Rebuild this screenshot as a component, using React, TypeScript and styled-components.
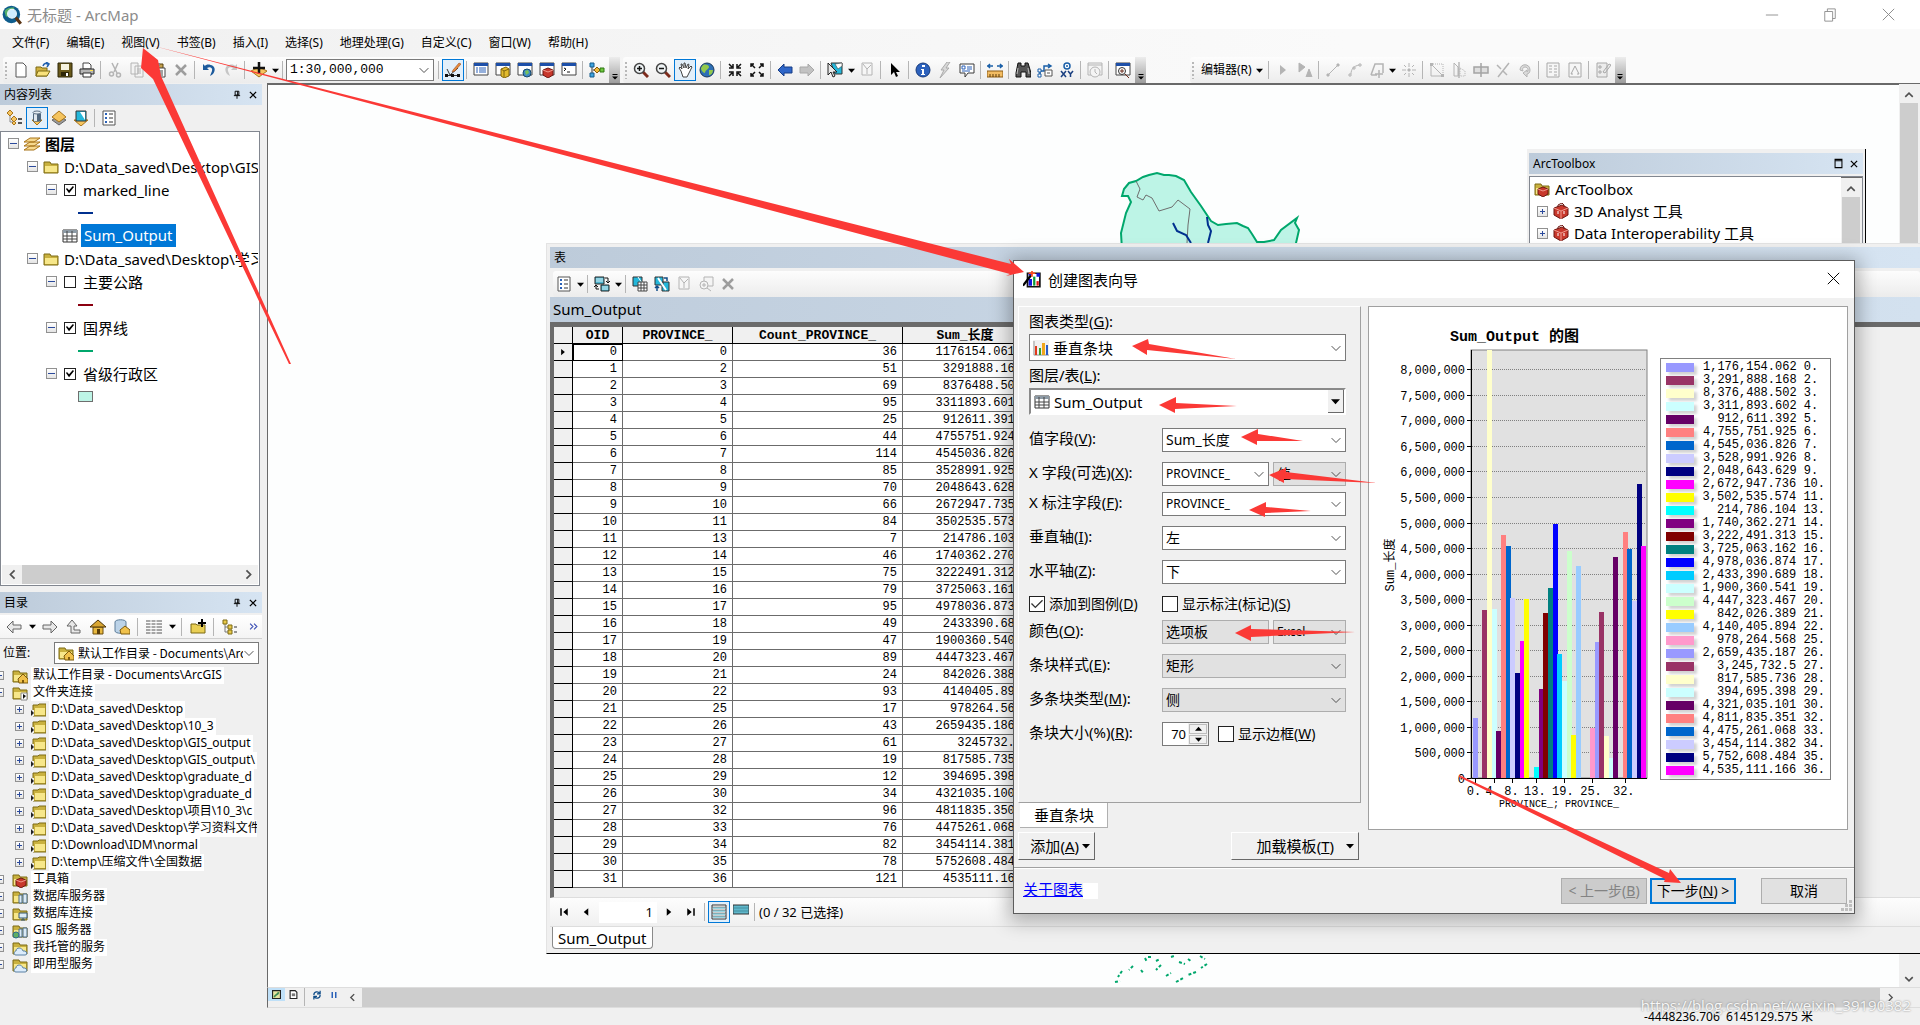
import React from 'react';
import styled, { createGlobalStyle, css } from 'styled-components';

const UI = '"Noto Sans", "Noto Sans CJK SC", sans-serif';
const NARROW = '"Noto Sans CJK SC", sans-serif';
const MONO = '"Liberation Mono", "Noto Sans CJK SC", monospace';
const FACE = '#f0f0f0';
const EDGE = '#a0a0a0';
const ACCENT = '#0078d7';
const MARK = '#fb3936';

const GlobalStyle = createGlobalStyle`
  *, *::before, *::after { box-sizing: border-box; }
  html, body { margin: 0; background: ${FACE}; overflow: hidden; }
  body { font: 12px/16px ${UI}; color: #000; }
  button, input, select { font: inherit; color: inherit; margin: 0; padding: 0; border: 0; border-radius: 0; background: none; }
  ul { list-style: none; margin: 0; padding: 0; }
  svg { flex: none; }
`;

/* ---------- icons ---------- */

const folder = (
  <>
    <path d="M1 3h6l1 2h7v9H1z" fill="#c9b13f" stroke="#7d6a14" />
    <path d="M2 7h12v6H2z" fill="#f7e78a" />
  </>
);
const server = <path d="M7 6h3v8H7zM11 5h4v9h-4z" fill="#dcebf5" stroke="#4a6a86" />;
const toolbox = (
  <>
    <path d="M1 5l8-3 6 3v7l-7 4-7-4z" fill="#c8382c" stroke="#6d1712" />
    <path d="M1 5l7 3 7-3M8 8v8" stroke="#f09a8e" fill="none" />
    <path d="M5 4V2l4-2 2 2v2" stroke="#6d1712" fill="none" />
    <path d="M5 8v3M11 8v3" stroke="#fff" />
  </>
);
const page = <path d="M3 1h7l3 3v11H3z" fill="#fff" stroke="#555" />;
const lens = (
  <>
    <path d="M10 10l5 5" stroke="#7d2b1c" strokeWidth="3" />
    <circle cx="6.500" cy="6.500" r="5" fill="#eef3f5" stroke="#444" strokeWidth="1.500" />
  </>
);
const win = (
  <>
    <path d="M1 1h14v12H1z" fill="#fff" stroke="#444" />
    <path d="M1 1h14v3H1z" fill="#1d4fa8" />
  </>
);
const grey = '#b4b4b4';

const glyphs: Record<string, React.ReactNode> = {
  app: (
    <>
      <circle cx="7.500" cy="7.500" r="7" fill="#0e5c8c" />
      <path d="M2 5c2-3 5-3 8-3-1 3-4 3-4 5s-2 3-3 2z" fill="#55b06a" />
      <circle cx="8" cy="7" r="3.500" fill="#cfeeff" stroke="#e8f4f8" />
      <path d="M11 10l4 5" stroke="#5a3312" strokeWidth="2.500" />
    </>
  ),
  page,
  open: (
    <>
      <path d="M1 5h5l1 1h5v8H1z" fill="#d1b140" stroke="#7d6a14" />
      <path d="M3 9h12l-3 5H1z" fill="#f9e27c" stroke="#7d6a14" />
      <path d="M8 4c1-3 3-3 5-2M11 0l3 2-2 3" stroke="#1f5fae" strokeWidth="1.500" fill="none" />
    </>
  ),
  save: (
    <>
      <path d="M1 1h14v14H1z" fill="#6a5a1c" stroke="#2d2608" />
      <path d="M4 2h8v6H4z" fill="#f5f2df" />
      <path d="M4 10h8v4H4z" fill="#2d2608" />
      <path d="M9 11h2v3H9z" fill="#fff" />
    </>
  ),
  print: (
    <>
      <path d="M4 1h6l2 2v4H4z" fill="#fff" stroke="#444" />
      <path d="M1 7h14v5H1z" fill="#b4b4b4" stroke="#2d2d2d" />
      <path d="M4 11h8v4H4z" fill="#fff" stroke="#2d2d2d" />
      <path d="M11 8h3v1h-3z" fill="#ffe24d" />
    </>
  ),
  cut: (
    <g stroke={grey} fill="none" strokeWidth="1.500">
      <path d="M5 1l5 10M11 1L7 10" />
      <circle cx="4.500" cy="12" r="2" />
      <circle cx="11.500" cy="13" r="2" />
    </g>
  ),
  copy: <path d="M2 1h7v11H2zM6 4h8v11H6zM8 7h4M8 9h4M8 11h4" fill="#f3f3f3" stroke={grey} />,
  paste: (
    <>
      <path d="M2 2h10v12H2z" fill="#c4a04c" stroke="#57420f" />
      <path d="M5 1h4v3H5z" fill="#888" />
      <path d="M6 6h8v9H6zM8 9h4M8 11h4M8 13h4" fill="#fff" stroke="#444" />
    </>
  ),
  del: <path d="M3 3l10 10M13 3L3 13" stroke="#9d9d9d" strokeWidth="2.500" />,
  undo: <path d="M2 2v6h6L6 6c3-2 6 0 5 3l-2 5c5-2 6-8 3-10S5 2 4 4z" fill="#1c5a9c" />,
  redo: <path d="M14 2v6H8l2-2C7 4 4 6 5 9l2 5C2 12 1 6 4 4s7-2 8 0z" fill="#c6c6c6" />,
  add: (
    <>
      <path d="M0 9l8-4 8 4-8 6z" fill="#f5c45e" stroke="#a8741b" />
      <path d="M8 0v12M2 6h12" stroke="#111" strokeWidth="2.500" />
    </>
  ),
  edit: (
    <>
      <path d="M2 7l3 6 8-7" stroke="#333" fill="none" />
      <path d="M8 8l6-7 2 1-6 7-3 1z" fill="#e88a3a" stroke="#8a3d10" strokeWidth=".5" />
      <path d="M1.500 13.500h12" stroke="#333" />
      <path d="M0 12h3v3H0zM6 12h3v3H6zM12 12h3v3h-3z" fill="#111" />
    </>
  ),
  toc: (
    <>
      {win}
      <path d="M3 6h2M3 8h2M3 10h2M6 6h7M6 8h7M6 10h7" stroke="#2a61b8" />
    </>
  ),
  catalogWin: (
    <>
      {win}
      <path d="M6 7l5-2 3 2v7l-5 2-3-2z" fill="#e2bb2e" stroke="#80650d" />
      <path d="M9 9v6M6 7l3 2 5-2" stroke="#80650d" fill="none" />
    </>
  ),
  searchWin: (
    <>
      {win}
      <circle cx="10" cy="11" r="4" fill="#3f8bc4" stroke="#17496e" />
      <path d="M8 9l3-1 1 3-3 2z" fill="#78c25c" />
    </>
  ),
  boxWin: (
    <>
      {win}
      <path d="M4 8l5-2 5 2v5l-5 3-5-3z" fill="#c8382c" stroke="#6d1712" />
      <path d="M4 8l5 2 5-2" fill="none" stroke="#f09a8e" />
    </>
  ),
  python: (
    <>
      {win}
      <path d="M3 6l2 1-2 2M6 10h3" stroke="#111" fill="none" />
    </>
  ),
  model: (
    <>
      <path d="M3 4v8M4 8h9" stroke="#333" />
      <path d="M1 1h4v4H1zM1 11h4v4H1z" fill="#3fa4e0" stroke="#145a8a" />
      <path d="M8 5l3 3-3 3-3-3z" fill="#f0b93c" stroke="#8a5b0b" />
      <path d="M11 6h4v4h-4z" fill="#6ec83e" stroke="#2c7410" />
    </>
  ),
  zoomIn: (
    <>
      {lens}
      <path d="M6.500 4v5M4 6.500h5" stroke="#111" strokeWidth="1.500" />
    </>
  ),
  zoomOut: (
    <>
      {lens}
      <path d="M4 6.500h5" stroke="#111" strokeWidth="1.500" />
    </>
  ),
  hand: (
    <path
      d="M4 9L2 6l1-1 2 2-1-5h1l2 4V1h1l1 5 2-4 1 .5L11 7l3-3 1 1-3 6-2 4H6z"
      fill="#fff"
      stroke="#444"
    />
  ),
  globe: (
    <>
      <circle cx="8" cy="8" r="7" fill="#2d6fb5" stroke="#17375c" />
      <path d="M4 3c3-1 6 0 6 2S6 8 6 11c-2 0-4-3-4-5zM10 8l4 0c0 3-2 5-4 5z" fill="#93c94b" />
    </>
  ),
  shrink: (
    <path
      d="M2 2l3 3M14 2l-3 3M2 14l3-3M14 14l-3-3M6 2v4H2M10 2v4h4M6 14v-4H2M10 14v-4h4"
      stroke="#111"
      strokeWidth="1.500"
      fill="none"
    />
  ),
  grow: (
    <path
      d="M2 2l4 4M14 2l-4 4M2 14l4-4M14 14l-4-4M5 2H2v3M11 2h3v3M5 14H2v-3M11 14h3v-3"
      stroke="#111"
      strokeWidth="1.500"
      fill="none"
    />
  ),
  back: <path d="M1 8l6-6v3h8v6H7v3z" fill="#2f66c8" stroke="#173c85" />,
  fwd: <path d="M15 8L9 2v3H1v6h8v3z" fill="#c2c2c2" stroke="#a8a8a8" />,
  select: (
    <>
      <path d="M4 1h11v11H8z" fill="#24b7da" stroke="#333" />
      <path d="M8 2l3 5 4-3V1z" fill="#fff" stroke="#333" strokeWidth=".5" />
      <path d="M1 1v12l3-3 2 5 2-1-2-4h4z" fill="#e8e8e8" stroke="#222" />
    </>
  ),
  clear: <path d="M3 1h10v12H3zM4 2l4 5 4-4M8 7v5" fill="#f6f6f6" stroke={grey} />,
  cursor: <path d="M4 1v12l3-3 2 5 2-1-2-4h4z" fill="#000" />,
  info: (
    <>
      <circle cx="8" cy="8" r="7" fill="#2d62bd" stroke="#163a7c" />
      <path d="M7 3h3v2H7zM6 7h3v5h1v1H6v-1h1V8H6z" fill="#fff" />
    </>
  ),
  bolt: <path d="M10 0L4 8h3l-4 8 9-10H9l4-6z" fill="#d8d8d8" stroke="#aaa" />,
  html: (
    <>
      <path d="M1 2h14v9H9l-3 4v-4H1z" fill="#fff" stroke="#3b3b3b" />
      <path d="M3 4h3v3H3zM8 5h5M8 7h5M3 9h8" stroke="#2a61b8" fill="none" />
    </>
  ),
  measure: (
    <>
      <path d="M0 4h6M10 4h6M3 2L1 4l2 2M13 2l2 2-2 2" stroke="#1a5fa8" strokeWidth="1.500" fill="none" />
      <path d="M0 9h16v6H0z" fill="#f2bc63" stroke="#8a5b14" />
      <path d="M3 12v3M6 12v3M9 12v3M12 12v3" stroke="#5c3a08" />
    </>
  ),
  binoc: (
    <>
      <path d="M3 1h3v3h4V1h3l3 10v4h-5v-5H6v5H1v-4z" fill="#555" stroke="#111" />
      <path d="M3 6l-1 6M13 6l1 6" stroke="#bbb" />
    </>
  ),
  route: (
    <g fill="none" stroke="#1a5fa8">
      <path d="M3 14V9h4V4h6M11 2l3 2-3 2" strokeWidth="1.500" />
      <path d="M1 12h3v3H1zM1 7h3v3H1z" fill="#fff" />
      <path d="M8 8h7v6H8zM10 11h3" stroke="#555" fill="#fff" />
    </g>
  ),
  xy: (
    <>
      <circle cx="8" cy="4" r="3" fill="#fff" stroke="#1a5fa8" strokeWidth="1.500" />
      <circle cx="8" cy="4" r="1" fill="#1a5fa8" />
      <path d="M2 9l5 6M7 9l-5 6M9 9l2.500 3L14 9M11.500 12v3" stroke="#1a3f80" strokeWidth="1.500" fill="none" />
    </>
  ),
  clock: (
    <g fill="#f4f4f4" stroke={grey}>
      <path d="M1 1h14v12H1zM1 3h14" />
      <circle cx="8" cy="10" r="5" />
      <path d="M8 7v3l2 2" />
    </g>
  ),
  viewer: (
    <>
      {win}
      <circle cx="7" cy="9" r="3.500" fill="#fff" stroke="#333" />
      <path d="M7 7v4M5 9h4M10 12l4 4" stroke="#6b2a1a" />
    </>
  ),
  edTool: <path d="M5 3v10l6-5z" fill={grey} />,
  edNote: <path d="M2 1v9l6-5zM9 15l3-8 3 8M10 12h4" fill={grey} stroke={grey} />,
  line: <path d="M2 12h2v2H2zM12 2h2v2h-2zM4 12L12 4" fill={grey} stroke={grey} />,
  arc: <path d="M2 12h2v2H2zM12 2h2v2h-2zM4 12c0-5 3-8 8-9M6 5h2v2H6z" fill="#f3f3f3" stroke={grey} />,
  trace: <path d="M2 13l4-11h8v9M2 13h6M10 8v8M6 12h8" fill="none" stroke={grey} strokeWidth="1.500" />,
  point: <path d="M8 1v4M8 11v4M1 8h4M11 8h4M3 3l2 2M11 11l2 2M13 3l-2 2M3 13l2-2M7 7h2v2H7z" fill={grey} stroke={grey} />,
  reshape: (
    <>
      <path d="M2 2v12h12L4 4" fill="none" stroke={grey} />
      <path d="M2 2h12v12" fill="none" stroke={grey} strokeDasharray="1 1" />
      <path d="M1 1h3v3H1zM12 12h3v3h-3z" fill={grey} />
    </>
  ),
  cutPoly: (
    <>
      <path d="M3 1v13h4V5z" fill="none" stroke={grey} />
      <path d="M8 0v16" stroke="#999" />
      <path d="M9 6l5 3v5H9z" fill="none" stroke={grey} strokeDasharray="1 1" />
    </>
  ),
  split: <path d="M1 5h14v6H1zM8 1v14" fill="#dedede" stroke="#a4a4a4" strokeWidth="1.500" />,
  cross: <path d="M2 3l4 4M8 9l4 4M14 1L3 15" fill="none" stroke={grey} strokeWidth="1.500" />,
  rotate: <path d="M3 8c0-7 10-7 10 0 0 3-2 4-3 4v3l-4-4 4-3v2c2-1 1-5-2-5-2 0-3 2-2 4z" fill="#dadada" stroke={grey} />,
  attrs: <path d="M2 1h12v14H2zM4 4h3M4 7h3M4 10h3M9 4h3M9 7h3M9 10h3M9 13h3" fill="#f6f6f6" stroke="#a8a8a8" />,
  sketch: <path d="M2 1h12v14H2zM4 12l4-8 4 8M4 12h2M10 12h2" fill="#f6f6f6" stroke="#a8a8a8" />,
  create: <path d="M2 1h10v14H2zM4 4h2v2H4zM4 9h2v2H4zM8 10l6-8 2 1-6 8z" fill="#ececec" stroke="#a8a8a8" />,
  listSrc: (
    <>
      <path d="M3 4v8h5M8 12v2" stroke="#888" fill="none" />
      <path d="M3 0l3 3-3 3-3-3zM7 6l3 3-3 3-3-3zM7 11l2 2-2 2-2-2z" fill="#f5c45e" stroke="#a8741b" />
      <path d="M11 9h4M11 13h4" stroke="#222" strokeWidth="1.500" />
    </>
  ),
  cylinder: (
    <>
      <path d="M3 10l5 5 5-5z" fill="#f5c45e" stroke="#a8741b" />
      <path d="M4 2h8v9c0 1-8 1-8 0z" fill="#4f677e" />
      <path d="M5 3h3v8H5z" fill="#dfe8ef" />
      <ellipse cx="8" cy="2.500" rx="4" ry="1.500" fill="#e4edf4" stroke="#5b7084" />
    </>
  ),
  layersVis: (
    <>
      <path d="M1 10l7 5 7-5-7-4z" fill="#9b9b9b" stroke="#666" />
      <path d="M1 7l7 5 7-5-7-6z" fill="#f5c45e" stroke="#a8741b" />
    </>
  ),
  layersSel: (
    <>
      <path d="M1 10l7 6 7-6z" fill="#f5c45e" stroke="#a8741b" />
      <path d="M3 1h10v10H3z" fill="#24b7da" stroke="#333" />
      <path d="M7 2h5v8z" fill="#fff" />
    </>
  ),
  options: (
    <>
      <path d="M2 1h12v14H2z" fill="#fff" stroke="#555" />
      <path d="M4 3h2v2H4zM4 7h2v2H4zM4 11h2v2H4z" fill="#2a61b8" />
      <path d="M8 4h4M8 8h4M8 12h4" stroke="#333" />
    </>
  ),
  layers: (
    <path d="M0 14h10l6-4H6zM0 10h10l6-4H6zM0 6h10l6-4H6z" fill="#f7d98f" stroke="#a8741b" />
  ),
  folder,
  tableIcon: (
    <>
      <path d="M1 2h14v12H1z" fill="#fff" stroke="#333" />
      <path d="M1 2h14v3H1z" fill="#8d9aa5" />
      <path d="M1 8h14M1 11h14M5 3v11M10 3v11" stroke="#444" />
    </>
  ),
  toolbox,
  arcToolbox: (
    <>
      {folder}
      <path d="M4 8l5-2 5 2v5l-5 3-5-3z" fill="#c8382c" stroke="#6d1712" />
      <path d="M4 8l5 2 5-2" fill="none" stroke="#f09a8e" />
    </>
  ),
  folderLink: (
    <>
      <path d="M3 3h5l1-1h7v12H3z" fill="#c9b13f" stroke="#7d6a14" />
      <path d="M5 6h10v7H5z" fill="#f7e78a" />
      <path d="M0 8h4v6H0z" fill="#f0f0f0" />
      <path d="M1 8l3 3-3 3z" fill="#222" />
    </>
  ),
  folderRoot: (
    <>
      {folder}
      <path d="M9 8h6v7H9z" fill="#fff" stroke="#888" />
      <path d="M11 9l3 2-3 3z" fill="#111" />
    </>
  ),
  folderHome: (
    <>
      {folder}
      <path d="M6 11l5-5 5 5v4H7z" fill="#f0c14b" stroke="#7d5a0c" />
      <path d="M10 12h2v3h-2z" fill="#7d5a0c" />
    </>
  ),
  folderServer: (
    <>
      {folder}
      {server}
    </>
  ),
  folderDb: (
    <>
      {folder}
      <path d="M7 7h8v5H7zM9 14h4M11 12v2" fill="#dcebf5" stroke="#33556f" />
    </>
  ),
  folderGis: (
    <>
      {folder}
      {server}
      <circle cx="4" cy="12" r="3" fill="#5fae62" stroke="#2b6c8e" />
    </>
  ),
  folderCloud: (
    <>
      {folder}
      <path d="M4 15c-3 0-2-4 0-4 0-4 6-4 7 0 4-1 5 4 2 4z" fill="#dcecfb" stroke="#5980a5" />
    </>
  ),
  backO: <path d="M1 8l6-6v4h8v4H7v4z" fill="#e8e8e8" stroke="#666" />,
  fwdO: <path d="M15 8L9 2v4H1v4h8v4z" fill="#e8e8e8" stroke="#666" />,
  up: <path d="M1 7l5-6 5 6H8v4h6v3H5V7z" fill="#e8e8e8" stroke="#666" />,
  home: (
    <>
      <path d="M3 8h10v7H3z" fill="#e8b93f" stroke="#6d4d0c" />
      <path d="M0 8l8-7 8 7z" fill="#d8a532" stroke="#4d3506" />
      <path d="M7 10h3v5H7z" fill="#5a3d08" />
    </>
  ),
  dbHome: (
    <>
      <path d="M1 3c0-3 11-3 11 0v9c0 3-11 3-11 0z" fill="#bcd3e8" stroke="#5d7d99" />
      <path d="M6 11l5-4 5 4v4H7z" fill="#f0c14b" stroke="#7d5a0c" />
    </>
  ),
  grid: (
    <>
      <path d="M0 2h16M0 5h16M0 8h16M0 11h16M0 14h16" stroke="#555" />
      <path d="M5 1v14M10 1v14" stroke="#fff" />
    </>
  ),
  connect: (
    <>
      <path d="M1 5h5l1 1h8v8H1z" fill="#e9cf55" stroke="#7d6a14" />
      <path d="M12 0v8M8 4h8" stroke="#000" strokeWidth="2" />
    </>
  ),
  tree: (
    <>
      <path d="M3 4v9h5M3 8h5" stroke="#777" fill="none" />
      <path d="M1 1h4v4H1zM6 6h4v4H6zM6 11h4v4H6z" fill="#e8c94a" stroke="#7d6a14" />
      <path d="M12 8h3M12 13h3" stroke="#333" />
    </>
  ),
  related: (
    <>
      <path d="M1 1h9v7H1zM7 9h8v6H7z" fill="#4fb5d0" stroke="#222" />
      <path d="M2 3h7M2 5h7M8 11h6M8 13h6" stroke="#d7f2f8" />
      <path d="M11 2h3v5M12 5l2 2 2-2M5 13H2V9M0 11l2-2 2 2" stroke="#111" fill="none" />
    </>
  ),
  selAttr: (
    <>
      <path d="M1 1h9v9H1z" fill="#24b7da" stroke="#333" />
      <path d="M6 1l4 6" stroke="#fff" />
      <path d="M6 6h9v9H6zM6 9h9M6 12h9M9 6v9M12 6v9" fill="#fff" stroke="#444" />
    </>
  ),
  switchSel: (
    <>
      <path d="M1 1h8v8H1zM8 6h7v9H8z" fill="#24b7da" stroke="#333" />
      <path d="M4 2l4 6 4 6" stroke="#fff" strokeWidth="2" fill="none" />
      <path d="M10 2h3v3M3 15v-5M1 12l2-2 2 2" stroke="#0f4c88" strokeWidth="1.500" fill="none" />
    </>
  ),
  zoomSel: (
    <g stroke={grey} fill="#f4f4f4">
      <path d="M6 1h9v9H6z" />
      <circle cx="6" cy="9" r="4" />
      <path d="M4 9h4M6 7v4M9 12l4 3" />
    </g>
  ),
  showAll: (
    <>
      <path d="M1 1h14v14H1z" fill="#fff" stroke="#333" />
      <path d="M2 4h12M2 7h12M2 10h12M2 13h12" stroke="#7cc8d8" strokeWidth="1.500" />
      <path d="M1 3h14M1 6h14M1 9h14M1 12h14" stroke="#333" strokeWidth=".5" />
    </>
  ),
  showSel: (
    <>
      <path d="M0 1h16v9H0z" fill="#5fb8cc" stroke="#333" />
      <path d="M1 4h14M1 7h14" stroke="#2b6573" strokeWidth=".5" />
    </>
  ),
  wizard: (
    <>
      <path d="M4 2h11v12H4z" fill="#fff" stroke="#111" strokeWidth="1.500" />
      <path d="M5 7h3v6H5zM5 2h3v2H5zM12 2h3v3h-3z" fill="#1414e0" />
      <path d="M9 5h2v8H9z" fill="#0b9a3a" />
      <path d="M12 9h2v4h-2z" fill="#e01414" />
      <path d="M0 13l7-9" stroke="#000" strokeWidth="2" />
      <path d="M8 0v5M5 2h6" stroke="#ff4a1c" strokeWidth="1.500" />
    </>
  ),
  chartType: (
    <>
      <path d="M0 0h16v16H0z" fill="#f1f1f1" />
      <path d="M1 1v14h15" stroke="#999" fill="none" />
      <path d="M2 6h2v9H2z" fill="#e03a1c" />
      <path d="M6 8h2v7H6z" fill="#3aa02a" />
      <path d="M9 3h3v12H9z" fill="#f0a61c" />
      <path d="M13 5h2v10h-2z" fill="#2a5cc8" />
    </>
  ),
  pin: <path d="M5 2h6v6H5zM9 2v6M3 9h10M8 9v5" fill="none" stroke="#000" strokeWidth="1.500" />,
  close: <path d="M3 3l10 10M13 3L3 13" stroke="#000" strokeWidth="2" />,
  max: <path d="M3 2h10v12H3zM3 4h10" fill="none" stroke="#000" strokeWidth="1.500" />,
  mapView: (
    <>
      <path d="M1 1h14v14H1z" fill="#e7e3a0" stroke="#222" strokeWidth="2" />
      <path d="M4 13c2-6 5-3 8-9" stroke="#3d8a52" strokeWidth="3" fill="none" />
    </>
  ),
  layoutView: (
    <>
      <path d="M2 1h9l3 3v11H2z" fill="#fff" stroke="#222" strokeWidth="2" />
      <path d="M5 6h6v5H5z" fill="#777" />
    </>
  ),
  refresh: <path d="M3 8c0-6 7-6 9-3M13 1v5H8M13 8c0 6-7 6-9 3M3 15v-5h5" stroke="#0f4c88" strokeWidth="2" fill="none" />,
  pause: <path d="M3 2h3v12H3zM10 2h3v12h-3z" fill="#2a61b8" />,
  first: <path d="M3 3h2v10H3zM13 3v10L7 8z" fill="#000" />,
  prev: <path d="M11 3v10L5 8z" fill="#000" />,
  next: <path d="M5 3v10l6-5z" fill="#000" />,
  last: <path d="M11 3h2v10h-2zM3 3v10l6-5z" fill="#000" />,
  left: <path d="M11 2L5 8l6 6" stroke="#505050" strokeWidth="2.500" fill="none" />,
  right: <path d="M5 2l6 6-6 6" stroke="#505050" strokeWidth="2.500" fill="none" />,
  upC: <path d="M2 11l6-6 6 6" stroke="#505050" strokeWidth="2.500" fill="none" />,
  downC: <path d="M2 5l6 6 6-6" stroke="#505050" strokeWidth="2.500" fill="none" />,
  chevron: <path d="M1 5l7 7 7-7" stroke="#444" strokeWidth="1.500" fill="none" />,
  triangle: <path d="M0 4h16l-8 9z" fill="#000" />,
  triangleUp: <path d="M0 13h16L8 4z" fill="#000" />,
  overflow: <path d="M3 4h10v2H3zM2 9h12l-6 6z" fill="#000" />,
  more: <path d="M2 3l5 5-5 5M9 3l5 5-5 5" stroke="#3c4fb5" strokeWidth="2" fill="none" />,
  minimize: <path d="M1 8h14" stroke="#888" />,
  restore: <path d="M2 4h9v11H2zM5 4V1h9v11h-3" fill="none" stroke="#888" />,
  thinX: <path d="M1 1l14 14M15 1L1 15" stroke="currentColor" strokeWidth="1.200" />,
};

const Icon = ({ name, size = 16 }: { name: string; size?: number }) => (
  <svg width={size} height={size} viewBox="0 0 16 16" aria-hidden="true">
    {glyphs[name]}
  </svg>
);

/* ---------- shared parts ---------- */

const ToolButton = styled.button<{ $on?: boolean; $w?: number }>`
  display: grid;
  place-items: center;
  flex: none;
  width: ${(p) => p.$w ?? 22}px;
  height: 22px;
  ${(p) =>
    p.$on &&
    css`
      border: 1px solid ${ACCENT};
      background: #e2effa;
    `}
`;

const Sep = styled.span`
  flex: none;
  width: 1px;
  height: 18px;
  margin: 0 3px 0 2px;
  background: #b5b5b5;
`;

const Grip = styled.span`
  flex: none;
  width: 2px;
  height: 17px;
  margin: 0 3px 0 2px;
  background: repeating-linear-gradient(#b8b8b8 0 2px, transparent 2px 4px);
`;

const Strip = styled.div<{ $indent?: number; $top?: number }>`
  display: flex;
  align-items: center;
  height: 26px;
  margin-top: ${(p) => p.$top ?? 0}px;
  margin-left: ${(p) => p.$indent ?? 3}px;
  background: linear-gradient(#fdfdfd, #ececec);
  border-radius: 3px;
`;

const Overflow = styled.button`
  display: flex;
  align-items: flex-end;
  justify-content: center;
  width: 11px;
  height: 26px;
  margin-left: 1px;
  padding-bottom: 3px;
  background: linear-gradient(#ededed, #9d9d9d);
`;

const Tools = ({ items }: { items: string[] }) => (
  <>
    {items.map((it, i) => {
      if (it === '|') return <Sep key={i} />;
      if (it === 'v')
        return (
          <ToolButton key={i} $w={10} aria-label="更多">
            <Icon name="triangle" size={7} />
          </ToolButton>
        );
      const on = it.startsWith('*');
      const name = on ? it.slice(1) : it;
      return (
        <ToolButton key={i} $on={on} aria-label={name}>
          <Icon name={name} />
        </ToolButton>
      );
    })}
  </>
);

const PaneTitle = styled.div`
  display: flex;
  align-items: center;
  gap: 6px;
  height: 21px;
  padding: 0 4px;
  background: linear-gradient(90deg, #bdcbda, #d6e4f2);
  span {
    flex: 1;
  }
  button {
    display: grid;
    place-items: center;
    width: 10px;
  }
`;

interface BoxLook {
  $h?: number;
  $grey?: boolean;
  $sunken?: boolean;
  $icon?: boolean;
  $size?: number;
  $narrow?: boolean;
}
const SelectBox = styled.span<BoxLook>`
  position: relative;
  display: flex;
  align-items: center;
  min-width: 0;
  height: ${(p) => p.$h ?? 24}px;
  border: 1px solid ${(p) => (p.$grey ? '#adadad' : '#7a7a7a')};
  background: ${(p) => (p.$grey ? '#e1e1e1' : '#fff')};
  ${(p) =>
    p.$size &&
    css`
      font-size: ${p.$size}px;
    `}
  ${(p) =>
    p.$narrow &&
    css`
      font-family: ${NARROW};
    `}
  ${(p) =>
    p.$sunken &&
    css`
      border: 2px solid;
      border-color: #8a8a8a #fff #fff #8a8a8a;
    `}
  select {
    appearance: none;
    flex: 1;
    min-width: 0;
    width: 100%;
    height: 100%;
    padding: 0 15px 0 ${(p) => (p.$icon ? 4 : 3)}px;
    white-space: nowrap;
    overflow: hidden;
  }
  > svg:first-child {
    flex: none;
    margin-left: 3px;
  }
`;

const Arrow = styled.i<{ $raised?: boolean }>`
  position: absolute;
  right: ${(p) => (p.$raised ? 0 : 5)}px;
  top: 0;
  bottom: 0;
  display: grid;
  place-items: center;
  width: ${(p) => (p.$raised ? 16 : 9)}px;
  pointer-events: none;
  ${(p) =>
    p.$raised &&
    css`
      background: ${FACE};
      border-right: 1px solid #696969;
      border-bottom: 1px solid #696969;
    `}
`;

interface ComboProps {
  id?: string;
  label?: string;
  value: string;
  icon?: string;
  h?: number;
  size?: number;
  grey?: boolean;
  sunken?: boolean;
  narrow?: boolean;
}
const Combo = ({ id, label, value, icon, h, size, grey: isGrey, sunken, narrow }: ComboProps) => (
  <SelectBox $h={h} $grey={isGrey} $sunken={sunken} $icon={!!icon} $size={size} $narrow={narrow}>
    {icon && <Icon name={icon} />}
    <select id={id} aria-label={label}>
      <option>{value}</option>
    </select>
    <Arrow $raised={sunken}>
      <Icon name={sunken ? 'triangle' : 'chevron'} size={sunken ? 9 : 10} />
    </Arrow>
  </SelectBox>
);

const Tick = styled.input.attrs({ type: 'checkbox' })<{ $s: number }>`
  appearance: none;
  flex: none;
  display: grid;
  place-items: center;
  width: ${(p) => p.$s}px;
  height: ${(p) => p.$s}px;
  border: 1px solid #222;
  background: #fff;
  &:checked::before {
    content: '';
    width: ${(p) => p.$s - 4}px;
    height: ${(p) => p.$s - 4}px;
    background: ${(p) => (p.$s > 12 ? '#333' : '#000')};
    clip-path: ${(p) =>
      p.$s > 12
        ? 'polygon(0 50%, 8% 42%, 36% 70%, 92% 14%, 100% 22%, 36% 86%)'
        : 'polygon(0 45%, 12% 32%, 38% 58%, 86% 6%, 100% 20%, 38% 96%)'};
  }
`;

const Expander = styled.button<{ $s: number }>`
  flex: none;
  width: ${(p) => p.$s}px;
  height: ${(p) => p.$s}px;
  border: 1px solid #919191;
  background: linear-gradient(#fff, #e4e4e4);
  display: grid;
  place-items: center;
`;
const Fold = ({ open, size = 11 }: { open?: boolean; size?: number }) => (
  <Expander $s={size} aria-label={open ? '折叠' : '展开'}>
    <svg width="7" height="7" viewBox="0 0 7 7">
      <path d={open ? 'M0 3.500h7' : 'M1 3.500h5M3.500 1v5'} stroke="#2b4a9c" />
    </svg>
  </Expander>
);

/* ---------- frame ---------- */

const Screen = styled.div`
  position: relative;
  display: flex;
  flex-direction: column;
  height: 100vh;
  overflow: hidden;
  background: ${FACE};
`;

const TitleBar = styled.header`
  display: flex;
  align-items: center;
  height: 29px;
  padding: 0 3px 0 2px;
  background: #fff;
  color: #8c8c8c;
  h1 {
    flex: 1;
    margin: 0 0 0 5px;
    font: 15px/20px ${UI};
  }
  button {
    display: grid;
    place-items: center;
    width: 58px;
    height: 28px;
  }
`;

const MenuBar = styled.nav`
  display: flex;
  align-items: center;
  gap: 1px;
  height: 28px;
  padding-left: 4px;
  background: linear-gradient(90deg, ${FACE}, #fafafa 70%);
  button {
    padding: 0 8px;
    line-height: 20px;
    white-space: nowrap;
  }
`;

const ToolRow = styled.div`
  display: flex;
  height: 26px;
  background: linear-gradient(90deg, ${FACE}, #fafafa 70%);
`;

const ScaleBox = styled.div`
  width: 148px;
  margin-right: 2px;
  font: 13px/18px ${MONO};
`;

const StripLabel = styled.button`
  display: flex;
  align-items: center;
  gap: 4px;
  padding: 0 3px 0 4px;
  white-space: nowrap;
`;

const Workspace = styled.div`
  display: grid;
  grid-template-columns: 262px minmax(0, 1fr);
  column-gap: 5px;
  flex: 1;
  min-height: 0;
`;

const Dock = styled.div`
  display: flex;
  flex-direction: column;
  min-height: 0;
`;

const ContentsPane = styled.section`
  display: flex;
  flex-direction: column;
  flex: 0 0 509px;
  padding: 1px 0 6px;
`;

const DockTools = styled.div`
  display: flex;
  align-items: center;
  height: 26px;
  padding-left: 4px;
`;

const TreeBox = styled.div`
  display: flex;
  flex-direction: column;
  flex: 1;
  margin-right: 2px;
  padding: 0 1px 1px;
  border: 1px solid #828790;
  background: #fff;
  overflow: hidden;
`;

const TreeList = styled.ul`
  flex: 1;
`;

const TreeItem = styled.li<{ $pad: number; $gap?: number; $bold?: boolean }>`
  display: flex;
  align-items: center;
  gap: ${(p) => p.$gap ?? 5}px;
  height: 23px;
  padding-left: ${(p) => p.$pad}px;
  font-size: 15px;
  font-weight: ${(p) => (p.$bold ? 700 : 400)};
  white-space: nowrap;
  overflow: hidden;
  label {
    display: flex;
    align-items: center;
    gap: 7px;
  }
`;

const Chosen = styled.span`
  padding: 0 3px;
  line-height: 23px;
  background: ${ACCENT};
  color: #fff;
`;

const LineKey = styled.i<{ $c: string }>`
  width: 15px;
  height: 2px;
  background: ${(p) => p.$c};
`;
const AreaKey = styled.i`
  width: 15px;
  height: 11px;
  border: 1px solid #6e6e6e;
  background: #bdf4e6;
`;

const HScroll = styled.div`
  display: flex;
  align-items: center;
  height: 19px;
  background: ${FACE};
  button {
    display: grid;
    place-items: center;
    width: 20px;
    height: 19px;
  }
`;
const Track = styled.div`
  flex: 1;
  height: 100%;
`;
const Thumb = styled.div<{ $w: string }>`
  width: ${(p) => p.$w};
  height: 100%;
  background: #cdcdcd;
`;

const CatalogPane = styled.section`
  display: flex;
  flex-direction: column;
  flex: 1;
  min-height: 0;
  overflow: hidden;
`;

const CatalogTools = styled.div`
  display: flex;
  align-items: center;
  gap: 2px;
  height: 26px;
  padding-left: 3px;
  background: linear-gradient(#fff, #f4f4f4);
  border-top: 2px solid ${FACE};
  border-bottom: 1px solid #d0d0d0;
`;

const Location = styled.div`
  display: grid;
  grid-template-columns: 51px minmax(0, 1fr);
  align-items: center;
  height: 28px;
  padding: 0 3px;
`;

const CatalogList = styled.ul`
  margin-left: -5px;
`;
const CatalogItem = styled.li<{ $child?: boolean }>`
  display: flex;
  align-items: center;
  gap: ${(p) => (p.$child ? 6 : 8)}px;
  height: 17px;
  padding-left: ${(p) => (p.$child ? 20 : 0)}px;
  margin-right: 5px;
  white-space: nowrap;
  overflow: hidden;
  span {
    height: 17px;
    padding: 0 2px;
    margin-left: ${(p) => (p.$child ? -3 : -5)}px;
    background: #fff;
  }
`;

/* ---------- map ---------- */

const MapPane = styled.main`
  display: flex;
  flex-direction: column;
  min-width: 0;
  padding-bottom: 1px;
`;
const MapRow = styled.div`
  display: flex;
  flex: 1;
  min-height: 0;
`;
const Canvas = styled.div`
  position: relative;
  flex: 1;
  overflow: hidden;
  border: solid #696969;
  border-width: 2px 0 0 1px;
  background: #fdfefe;
  svg {
    display: block;
  }
`;
const VScroll = styled.div`
  display: flex;
  flex-direction: column;
  width: 21px;
  padding: 2px 2px 0 1px;
  border-top: 1px solid #696969;
  background: ${FACE};
  button {
    display: grid;
    place-items: center;
    height: 17px;
  }
`;
const VThumb = styled.div<{ $h: string }>`
  height: ${(p) => p.$h};
  background: #cdcdcd;
`;
const VTrack = styled.div`
  flex: 1;
`;
const MapBar = styled.div`
  display: flex;
  align-items: flex-start;
  height: 21px;
  border-left: 1px solid #696969;
  border-top: 1px solid #ddd;
  border-bottom: 1px solid #ddd;
`;
const ViewButton = styled.button<{ $on?: boolean }>`
  display: grid;
  place-items: center;
  width: 17px;
  height: 13px;
  background: ${(p) => (p.$on ? '#bfe0f8' : 'none')};
`;

const StatusBar = styled.footer`
  display: flex;
  justify-content: flex-end;
  height: 16px;
  padding-right: 107px;
  line-height: 16px;
  white-space: pre;
`;

const Watermark = styled.div`
  position: absolute;
  right: 9px;
  bottom: 12px;
  font: 15px/16px "Open Sans", sans-serif;
  color: #f6f6f6;
  text-shadow: 0 0 2px #777;
`;

/* ---------- floating windows ---------- */

const ToolboxWindow = styled.section`
  position: absolute;
  left: 1527px;
  top: 149px;
  width: 339px;
  height: 110px;
  padding: 4px 2px 0 2px;
  background: ${FACE};
  border-right: 1px solid #000;
`;
const ToolboxBody = styled.div`
  display: flex;
  margin-top: 2px;
  border: 1px solid #828790;
  background: #fff;
  height: 90px;
  ul {
    flex: 1;
    padding-top: 1px;
  }
  li {
    display: flex;
    align-items: center;
    gap: 5px;
    height: 22px;
    padding-left: 7px;
    font-size: 15px;
  }
  li:first-child {
    padding-left: 4px;
  }
`;

const TableWindow = styled.section`
  position: absolute;
  left: 546px;
  right: 0;
  top: 243px;
  padding: 3px 0 4px 3px;
  background: ${FACE};
  border-top: 1px solid #e3e3e3;
  border-left: 1px solid #e3e3e3;
  border-bottom: 1px solid #000;
`;
const TableCaption = styled.div`
  height: 25px;
  padding: 0 3px;
  font-size: 15px;
  line-height: 25px;
  background: linear-gradient(90deg, #bfcddc, #d3e1ef);
`;
const GridBox = styled.div`
  border: solid #6b6b6b;
  border-width: 5px 0 0 4px;
  padding-bottom: 9px;
  border-bottom: 1px solid #ddd;
`;
const Grid = styled.table`
  width: 474px;
  table-layout: fixed;
  border-collapse: separate;
  border-spacing: 0;
  background: #fff;
  font: 12px/15px ${MONO};
  th,
  td {
    height: 17px;
    padding: 1px 5px 0 0;
    border-right: 1px solid #6b6b6b;
    border-bottom: 1px solid #6b6b6b;
    text-align: right;
    white-space: nowrap;
  }
  thead th {
    padding: 1px 0 0;
    background: ${FACE};
    text-align: center;
    font-size: 13px;
    border-color: #000;
  }
  tbody th {
    background: ${FACE};
    border-color: #000;
    text-align: center;
    padding: 0;
  }
  tbody th svg {
    display: block;
    margin: 0 auto;
  }
  tbody tr:first-child td:nth-child(2) {
    outline: 1px solid #000;
    outline-offset: -1px;
  }
`;
const Pager = styled.div`
  display: flex;
  align-items: center;
  height: 29px;
  padding-left: 3px;
  background: linear-gradient(#fdfdfd, #f0f0f0);
  border-bottom: 1px solid #ddd;
  font-size: 13px;
  > span:last-child {
    padding-left: 1px;
  }
  input {
    width: 58px;
    height: 21px;
    margin: 0 1px 0 2px;
    padding-right: 4px;
    text-align: right;
    background: #fff;
  }
`;
const PageButton = styled.button`
  display: grid;
  place-items: center;
  width: 22px;
  height: 22px;
`;
const SheetTab = styled.button`
  display: block;
  height: 22px;
  margin-left: 2px;
  padding: 0 5px;
  font-size: 15px;
  line-height: 20px;
  background: #fff;
  border: solid #8a8a8a;
  border-width: 0 1px 1px;
  border-radius: 0 0 4px 4px;
`;

const Dialog = styled.section`
  position: absolute;
  left: 1013px;
  top: 260px;
  width: 842px;
  background: ${FACE};
  border: 1px solid #5c5c5c;
  box-shadow: 0 3px 18px 4px rgba(0, 0, 0, 0.3);
  font-size: 14px;
`;
const DialogTitle = styled.header`
  display: flex;
  align-items: center;
  gap: 7px;
  height: 37px;
  padding: 0 14px 0 9px;
  background: #fff;
  h2 {
    flex: 1;
    margin: 0;
    font: 15px/20px ${UI};
  }
`;
const DialogBody = styled.div`
  display: flex;
  gap: 7px;
  padding: 8px 6px 7px 4px;
  border-bottom: 1px solid ${EDGE};
`;
const LeftSide = styled.div`
  width: 343px;
`;
const FormPanel = styled.form`
  height: 497px;
  padding: 5px 14px 0 10px;
  border: 1px solid;
  border-color: #fff ${EDGE} ${EDGE} #fff;
`;
const FormLabel = styled.label<{ $top?: number }>`
  display: block;
  height: 20px;
  margin: ${(p) => p.$top ?? 0}px 0 2px;
  font-size: 15px;
  line-height: 18px;
  white-space: nowrap;
`;
const Field = styled.div<{ $top: number }>`
  display: grid;
  grid-template-columns: 133px minmax(0, 1fr);
  align-items: center;
  margin-top: ${(p) => p.$top}px;
  > label:not(:has(input)) {
    padding-bottom: 4px;
    font-size: 15px;
    line-height: 16px;
    white-space: nowrap;
  }
`;
const Pair = styled.div`
  display: grid;
  grid-template-columns: 107px minmax(0, 1fr);
  gap: 4px;
`;
const CheckLabel = styled.label`
  display: flex;
  align-items: center;
  gap: 4px;
  white-space: nowrap;
`;
const SizeRow = styled.div`
  display: flex;
  align-items: center;
  gap: 9px;
`;
const Spin = styled.span`
  display: flex;
  width: 47px;
  height: 24px;
  border: 1px solid #7a7a7a;
  background: #fff;
  font-size: 13px;
  input {
    width: 25px;
    padding-right: 2px;
    text-align: right;
  }
`;
const SpinButtons = styled.span`
  display: grid;
  flex: 1;
  gap: 1px;
  padding: 1px;
  background: ${FACE};
  button {
    display: grid;
    place-items: center;
    border: 1px solid #bdbdbd;
  }
`;
const TypeTab = styled.button`
  display: block;
  height: 25px;
  margin-left: 2px;
  padding: 0 13px 0 14px;
  background: #fff;
  border-right: 1px solid #b0b0b0;
  border-bottom: 1px solid #b0b0b0;
  font-size: 15px;
  line-height: 20px;
`;
const SideButtons = styled.div`
  display: flex;
  justify-content: space-between;
  margin: 4px 2px 0 0;
`;
const Raised = styled.button<{ $w: number }>`
  display: flex;
  align-items: center;
  justify-content: flex-end;
  gap: ${(p) => (p.$w > 100 ? 12 : 3)}px;
  width: ${(p) => p.$w}px;
  height: 28px;
  padding-right: 4px;
  border: 1px solid;
  border-color: #fff #696969 #696969 #fff;
  font-size: 15px;
  white-space: nowrap;
`;
const ChartPanel = styled.div`
  display: flex;
  align-items: flex-start;
  flex: 1;
  height: 524px;
  border: 1px solid ${EDGE};
  background: #fff;
  > svg {
    font-family: ${MONO};
  }
`;
const Legend = styled.ul`
  width: 171px;
  margin-top: 51px;
  padding: 2px 5px;
  border: 1px solid #808080;
  font: 12px/13px ${MONO};
  li {
    display: flex;
    align-items: center;
    gap: 9px;
    height: 13px;
    white-space: pre;
  }
`;
const Swatch = styled.i<{ $c: string }>`
  width: 28px;
  height: 9px;
  background: ${(p) => p.$c};
  box-shadow: 3px 3px 3px rgba(0, 0, 0, 0.18);
`;
const DialogFoot = styled.footer`
  position: relative;
  display: flex;
  align-items: center;
  height: 45px;
  padding: 0 7px 0 9px;
  border-top: 1px solid #fff;
  a {
    padding-bottom: 4px;
    font-size: 15px;
    line-height: 18px;
    color: #00f;
  }
`;
const LinkPad = styled.i`
  width: 15px;
  height: 16px;
  margin-right: auto;
  background: #fff;
`;
const SizeGrip = styled.svg`
  position: absolute;
  right: 2px;
  bottom: 2px;
`;
const PushButton = styled.button<{ $main?: boolean; $left?: number }>`
  width: 86px;
  height: 26px;
  margin-left: ${(p) => p.$left ?? 0}px;
  border: ${(p) => (p.$main ? `2px solid ${ACCENT}` : '1px solid #adadad')};
  background: #e1e1e1;
  font-size: 14px;
  line-height: 18px;
  white-space: nowrap;
  &:disabled {
    background: #ccc;
    color: #838383;
  }
`;

const Marks = styled.svg`
  position: absolute;
  left: 0;
  top: 0;
  pointer-events: none;
`;

/* ---------- data ---------- */

const menus = ['文件(F)', '编辑(E)', '视图(V)', '书签(B)', '插入(I)', '选择(S)', '地理处理(G)', '自定义(C)', '窗口(W)', '帮助(H)'];

// [province id, count, length as stored]
const records: [number, number, string][] = [
  [0, 36, '1176154.0617'], [2, 51, '3291888.168'], [3, 69, '8376488.502'], [4, 95, '3311893.6016'],
  [5, 25, '912611.3916'], [6, 44, '4755751.9248'], [7, 114, '4545036.8262'], [8, 85, '3528991.9258'],
  [9, 70, '2048643.6285'], [10, 66, '2672947.7356'], [11, 84, '3502535.5736'], [13, 7, '214786.1035'],
  [14, 46, '1740362.2705'], [15, 75, '3222491.3129'], [16, 79, '3725063.1616'], [17, 95, '4978036.8737'],
  [18, 49, '2433390.689'], [19, 47, '1900360.5405'], [20, 89, '4447323.4674'], [21, 24, '842026.3887'],
  [22, 93, '4140405.894'], [25, 17, '978264.568'], [26, 43, '2659435.1868'], [27, 61, '3245732.5'],
  [28, 19, '817585.7356'], [29, 12, '394695.3984'], [30, 34, '4321035.1006'], [32, 96, '4811835.3505'],
  [33, 76, '4475261.0684'], [34, 82, '3454114.3818'], [35, 78, '5752608.4843'], [36, 121, '4535111.166'],
];
const legendValues = [
  '1,176,154.062', '3,291,888.168', '8,376,488.502', '3,311,893.602', '912,611.392', '4,755,751.925',
  '4,545,036.826', '3,528,991.926', '2,048,643.629', '2,672,947.736', '3,502,535.574', '214,786.104',
  '1,740,362.271', '3,222,491.313', '3,725,063.162', '4,978,036.874', '2,433,390.689', '1,900,360.541',
  '4,447,323.467', '842,026.389', '4,140,405.894', '978,264.568', '2,659,435.187', '3,245,732.5',
  '817,585.736', '394,695.398', '4,321,035.101', '4,811,835.351', '4,475,261.068', '3,454,114.382',
  '5,752,608.484', '4,535,111.166',
];
const palette = [
  '#9999ff', '#993366', '#ffffcc', '#ccffff', '#660066', '#ff8080', '#0066cc', '#ccccff', '#000080', '#ff00ff',
  '#ffff00', '#00ffff', '#800080', '#800000', '#008080', '#0000ff', '#00ccff', '#ccffff', '#ccffcc', '#ffff00',
  '#99ccff', '#ff99cc', '#9999ff', '#993366', '#ffffcc', '#ccffff', '#660066', '#ff8080', '#0066cc', '#ccccff',
  '#000080', '#ff00ff',
];

const connections = [
  'D:\\Data_saved\\Desktop', 'D:\\Data_saved\\Desktop\\10_3', 'D:\\Data_saved\\Desktop\\GIS_output',
  'D:\\Data_saved\\Desktop\\GIS_output\\', 'D:\\Data_saved\\Desktop\\graduate_d',
  'D:\\Data_saved\\Desktop\\graduate_d', 'D:\\Data_saved\\Desktop\\项目\\10_3\\c',
  'D:\\Data_saved\\Desktop\\学习资料文件', 'D:\\Download\\IDM\\normal', 'D:\\temp\\压缩文件\\全国数据',
];
const services: [string, string][] = [
  ['arcToolbox', '工具箱'], ['folderServer', '数据库服务器'], ['folderDb', '数据库连接'],
  ['folderGis', 'GIS 服务器'], ['folderCloud', '我托管的服务'], ['folderCloud', '即用型服务'],
];

/* ---------- chart ---------- */

const BASE = 471;
const yOf = (v: number) => Math.round(BASE - (v / 1e6) * 51.1);
const xOf = (v: number) => 104 + v * 4.68;

const Chart = () => (
  <svg width="291" height="520" viewBox="0 0 291 520" fontSize="12">
    <text x="81" y="34" fontSize="15" fontWeight="700">Sum_Output 的图</text>
    <rect x="102" y="43" width="176" height={BASE - 43} fill="#e1e1e1" stroke="#808080" />
    {Array.from({ length: 17 }, (_, i) => {
      const v = i * 500000;
      return (
        <g key={v}>
          {v > 0 && <path d={`M103 ${yOf(v) + 0.5}H277`} stroke="#808080" strokeDasharray="1 1" />}
          <path d={`M98 ${yOf(v) + 0.5}h4`} stroke="#000" />
          <text x="96" y={yOf(v) + 5} textAnchor="end">{v.toLocaleString('en-US')}</text>
        </g>
      );
    })}
    {records.map(([id, , len], i) => {
      const y = Math.max(43, yOf(Number(len)));
      return <rect key={id} x={Math.round(xOf(id))} y={y} width="5" height={BASE - y} fill={palette[i]} />;
    })}
    <path d={`M102.500 43V${BASE}.500H278`} stroke="#000" fill="none" />
    {[0, 4, 8, 13, 19, 25, 32].map((v) => (
      <g key={v}>
        <path d={`M${Math.round(xOf(v)) + 2.5} ${BASE}v5`} stroke="#000" />
        <text x={xOf(v) + 1} y="488" textAnchor="middle">{v}.</text>
      </g>
    ))}
    <text x="190" y="500" fontSize="10" textAnchor="middle">PROVINCE_; PROVINCE_</text>
    <text transform="translate(25 258) rotate(-90)" textAnchor="middle" fontSize="12">Sum_长度</text>
  </svg>
);

const arrows = [
  '291,364 289,364 153,79 141,68 143,48 158,60 161,76',
  '150,45 1010,274 1006,276 1024,272 1009,259 1011,264',
  '1236,359 1147,350 1147,355 1132,346 1148,339 1149,344',
  '1237,406 1175,409 1175,413 1159,405 1176,397 1176,403',
  '1303,441 1257,441 1257,445 1241,437 1258,429 1258,434',
  '1377,483 1284,479 1284,483 1269,475 1286,468 1286,472',
  '1311,511 1265,513 1265,517 1249,510 1266,502 1266,507',
  '1355,632 1251,637 1251,641 1235,633 1251,625 1251,629',
  '1459,775 1459,777 1665,879 1664,882 1681,883 1670,869 1669,873',
];

const Acc = ({ text, k, end = ':' }: { text: string; k: string; end?: string }) => (
  <>
    {text}(<u>{k}</u>){end}
  </>
);

export default function App() {
  return (
    <Screen>
      <GlobalStyle />
      <TitleBar>
        <Icon name="app" size={20} />
        <h1>无标题 - ArcMap</h1>
        <button aria-label="最小化"><Icon name="minimize" size={14} /></button>
        <button aria-label="还原"><Icon name="restore" size={14} /></button>
        <button aria-label="关闭"><Icon name="thinX" size={13} /></button>
      </TitleBar>

      <MenuBar>
        {menus.map((m) => <button key={m}>{m}</button>)}
      </MenuBar>

      <ToolRow>
        <Strip>
          <Grip />
          <Tools items={['page', 'open', 'save', 'print', '|', 'cut', 'copy', 'paste', 'del', '|', 'undo', 'redo', '|', 'add', 'v', '|']} />
          <ScaleBox><Combo label="比例尺" value="1:30,000,000" h={22} /></ScaleBox>
          <Tools items={['|', '*edit', '|', 'toc', 'catalogWin', 'searchWin', 'boxWin', 'python', '|', 'model']} />
          <Overflow aria-label="工具条选项"><Icon name="overflow" size={8} /></Overflow>
        </Strip>
        <Strip>
          <Grip />
          <Tools
            items={['zoomIn', 'zoomOut', '*hand', 'globe', '|', 'shrink', 'grow', '|', 'back', 'fwd', '|', 'select', 'v', 'clear', '|',
              'cursor', '|', 'info', 'bolt', 'html', '|', 'measure', '|', 'binoc', 'route', 'xy', '|', 'clock', '|', 'viewer']}
          />
          <Overflow aria-label="工具条选项"><Icon name="overflow" size={8} /></Overflow>
        </Strip>
        <Strip $indent={44}>
          <Grip />
          <StripLabel>编辑器(R)<Icon name="triangle" size={7} /></StripLabel>
          <Tools
            items={['|', 'edTool', 'edNote', '|', 'line', 'arc', 'trace', 'v', 'point', '|', 'reshape', 'cutPoly', 'split', 'cross', 'rotate',
              '|', 'attrs', 'sketch', '|', 'create']}
          />
          <Overflow aria-label="工具条选项"><Icon name="overflow" size={8} /></Overflow>
        </Strip>
      </ToolRow>

      <Workspace>
        <Dock>
          <ContentsPane>
            <PaneTitle>
              <span>内容列表</span>
              <button aria-label="固定"><Icon name="pin" size={10} /></button>
              <button aria-label="关闭"><Icon name="close" size={10} /></button>
            </PaneTitle>
            <DockTools>
              <Tools items={['listSrc', '*cylinder', 'layersVis', 'layersSel', '|', 'options']} />
            </DockTools>
            <TreeBox>
              <TreeList>
                <TreeItem $pad={6} $bold><Fold open /><Icon name="layers" />图层</TreeItem>
                <TreeItem $pad={25}><Fold open /><Icon name="folder" />D:\Data_saved\Desktop\GIS</TreeItem>
                <TreeItem $pad={44} $gap={7}><Fold open /><label><Tick $s={12} defaultChecked />marked_line</label></TreeItem>
                <TreeItem $pad={76}><LineKey $c="#00308f" /></TreeItem>
                <TreeItem $pad={60} $gap={3}><Icon name="tableIcon" /><Chosen>Sum_Output</Chosen></TreeItem>
                <TreeItem $pad={25}><Fold open /><Icon name="folder" />D:\Data_saved\Desktop\学习</TreeItem>
                <TreeItem $pad={44} $gap={7}><Fold open /><label><Tick $s={12} />主要公路</label></TreeItem>
                <TreeItem $pad={76}><LineKey $c="#8b0010" /></TreeItem>
                <TreeItem $pad={44} $gap={7}><Fold open /><label><Tick $s={12} defaultChecked />国界线</label></TreeItem>
                <TreeItem $pad={76}><LineKey $c="#00a76c" /></TreeItem>
                <TreeItem $pad={44} $gap={7}><Fold open /><label><Tick $s={12} defaultChecked />省级行政区</label></TreeItem>
                <TreeItem $pad={76}><AreaKey /></TreeItem>
              </TreeList>
              <HScroll>
                <button aria-label="向左"><Icon name="left" size={11} /></button>
                <Track><Thumb $w="36%" /></Track>
                <button aria-label="向右"><Icon name="right" size={11} /></button>
              </HScroll>
            </TreeBox>
          </ContentsPane>

          <CatalogPane>
            <PaneTitle>
              <span>目录</span>
              <button aria-label="固定"><Icon name="pin" size={10} /></button>
              <button aria-label="关闭"><Icon name="close" size={10} /></button>
            </PaneTitle>
            <CatalogTools>
              <Tools items={['backO', 'v', 'fwdO', 'up', 'home', 'dbHome', '|', 'grid', 'v', '|', 'connect', '|', 'tree']} />
              <ToolButton $w={20} aria-label="更多"><Icon name="more" size={9} /></ToolButton>
            </CatalogTools>
            <Location>
              <label htmlFor="location">位置:</label>
              <Combo id="location" value="默认工作目录 - Documents\ArcG" icon="folderHome" h={22} narrow />
            </Location>
            <CatalogList>
              <CatalogItem><Fold size={9} /><Icon name="folderHome" /><span>默认工作目录 - Documents\ArcGIS</span></CatalogItem>
              <CatalogItem><Fold size={9} /><Icon name="folderRoot" /><span>文件夹连接</span></CatalogItem>
              {connections.map((c, i) => (
                <CatalogItem key={i} $child><Fold size={9} /><Icon name="folderLink" /><span>{c}</span></CatalogItem>
              ))}
              {services.map(([icon, name]) => (
                <CatalogItem key={name}><Fold size={9} /><Icon name={icon} /><span>{name}</span></CatalogItem>
              ))}
            </CatalogList>
          </CatalogPane>
        </Dock>

        <MapPane>
          <MapRow>
            <Canvas>
              <svg width="1100" height="902" viewBox="268 85 1100 902" fill="none">
                <path
                  d="M1122 250l-1-17 5-20 5-11-3-6h-6l2-7 5-6 7-2 7-4 6-2 8-2 7 2 5 0 7 1 8 4 7 12 10 14 10 15 7 4 8-1 11-1 6 3 5 2 4 6 5 8 7 0 10-2 7-10 16-12-2 5 4 7-3 13v10z"
                  fill="#bdf4e6" stroke="#00a76c" strokeWidth="2"
                />
                <path d="M1136 181l4 8-3 8 6 3 3-5 6 3 7 13 13-4 6-7 12 9-2 16-1 18" stroke="#6e6e6e" />
                <path d="M1173 223l4 8 9 4 5 8M1207 217l1 8 3 6-3 12" stroke="#00308f" strokeWidth="2" />
                <path
                  d="M1145 958l2 4M1148 957h4M1156 961l4-2M1161 965l-5 5M1171 957l3-1M1179 962l6 2M1188 959l4 3M1200 956l5 3M1207 964l-6 4M1196 972l-8 3M1133 966l-4 4M1122 971l-4 6M1115 982l5-1M1141 970l3 4M1166 976l5-3M1176 982l7-4"
                  stroke="#00a76c" strokeWidth="2" strokeDasharray="3 2"
                />
              </svg>
            </Canvas>
            <VScroll>
              <button aria-label="向上"><Icon name="upC" size={10} /></button>
              <VTrack><VThumb $h="60%" /></VTrack>
              <button aria-label="向下"><Icon name="downC" size={10} /></button>
            </VScroll>
          </MapRow>
          <MapBar>
            <ViewButton $on aria-label="数据视图"><Icon name="mapView" size={9} /></ViewButton>
            <ViewButton aria-label="布局视图"><Icon name="layoutView" size={9} /></ViewButton>
            <Sep />
            <ViewButton aria-label="刷新"><Icon name="refresh" size={10} /></ViewButton>
            <ViewButton aria-label="暂停"><Icon name="pause" size={8} /></ViewButton>
            <Track>
              <HScroll>
                <button aria-label="向左"><Icon name="left" size={9} /></button>
                <Track><Thumb $w="100%" /></Track>
                <button aria-label="向右"><Icon name="right" size={9} /></button>
                <button aria-label="角落" />
              </HScroll>
            </Track>
          </MapBar>
        </MapPane>
      </Workspace>

      <StatusBar>{'-4448236.706  6145129.575 米'}</StatusBar>
      <Watermark>https://blog.csdn.net/weixin_39190382</Watermark>

      <ToolboxWindow>
        <PaneTitle>
          <span>ArcToolbox</span>
          <button aria-label="最大化"><Icon name="max" size={11} /></button>
          <button aria-label="关闭"><Icon name="close" size={10} /></button>
        </PaneTitle>
        <ToolboxBody>
          <ul>
            <li><Icon name="arcToolbox" />ArcToolbox</li>
            <li><Fold /><Icon name="toolbox" />3D Analyst 工具</li>
            <li><Fold /><Icon name="toolbox" />Data Interoperability 工具</li>
          </ul>
          <VScroll>
            <button aria-label="向上"><Icon name="upC" size={10} /></button>
            <VTrack><VThumb $h="100%" /></VTrack>
          </VScroll>
        </ToolboxBody>
      </ToolboxWindow>

      <TableWindow>
        <PaneTitle><span>表</span></PaneTitle>
        <Strip $top={3}>
          <Tools items={['options', 'v', '|', 'related', 'v', '|', 'selAttr', 'switchSel', 'clear', 'zoomSel', 'del']} />
        </Strip>
        <TableCaption>Sum_Output</TableCaption>
        <GridBox>
          <Grid>
            <colgroup>
              <col width="19" />
              <col width="50" />
              <col width="110" />
              <col width="170" />
              <col />
            </colgroup>
            <thead>
              <tr><th /><th>OID</th><th>PROVINCE_</th><th>Count_PROVINCE_</th><th>Sum_长度</th></tr>
            </thead>
            <tbody>
              {records.map(([id, count, len], i) => (
                <tr key={id}>
                  <th>{i === 0 && <Icon name="next" size={10} />}</th>
                  <td>{i}</td>
                  <td>{id}</td>
                  <td>{count}</td>
                  <td>{len}</td>
                </tr>
              ))}
            </tbody>
          </Grid>
        </GridBox>
        <Pager>
          <PageButton aria-label="首条"><Icon name="first" size={12} /></PageButton>
          <PageButton aria-label="上一条"><Icon name="prev" size={12} /></PageButton>
          <input aria-label="记录" defaultValue="1" />
          <PageButton aria-label="下一条"><Icon name="next" size={12} /></PageButton>
          <PageButton aria-label="末条"><Icon name="last" size={12} /></PageButton>
          <Tools items={['|', '*showAll', 'showSel', '|']} />
          <span>(0 / 32 已选择)</span>
        </Pager>
        <SheetTab>Sum_Output</SheetTab>
      </TableWindow>

      <Dialog>
        <DialogTitle>
          <Icon name="wizard" size={18} />
          <h2>创建图表向导</h2>
          <button aria-label="关闭"><Icon name="thinX" size={13} /></button>
        </DialogTitle>
        <DialogBody>
          <LeftSide>
            <FormPanel>
              <FormLabel htmlFor="type"><Acc text="图表类型" k="G" /></FormLabel>
              <Combo id="type" value="垂直条块" icon="chartType" h={27} size={15} />
              <FormLabel htmlFor="layer" $top={5}><Acc text="图层/表" k="L" /></FormLabel>
              <Combo id="layer" value="Sum_Output" icon="tableIcon" h={27} size={15} sunken />
              <Field $top={13}>
                <label htmlFor="value"><Acc text="值字段" k="V" /></label>
                <Combo id="value" value="Sum_长度" />
              </Field>
              <Field $top={10}>
                <label htmlFor="xf"><Acc text="X 字段(可选)" k="X" /></label>
                <Pair>
                  <Combo id="xf" value="PROVINCE_" size={12} />
                  <Combo label="排序" value="值" grey />
                </Pair>
              </Field>
              <Field $top={6}>
                <label htmlFor="xl"><Acc text="X 标注字段" k="F" /></label>
                <Combo id="xl" value="PROVINCE_" size={12} />
              </Field>
              <Field $top={10}>
                <label htmlFor="va"><Acc text="垂直轴" k="I" /></label>
                <Combo id="va" value="左" />
              </Field>
              <Field $top={10}>
                <label htmlFor="ha"><Acc text="水平轴" k="Z" /></label>
                <Combo id="ha" value="下" />
              </Field>
              <Field $top={12}>
                <CheckLabel><Tick $s={16} defaultChecked /><span><Acc text="添加到图例" k="D" end="" /></span></CheckLabel>
                <CheckLabel><Tick $s={16} /><span><Acc text="显示标注(标记)" k="S" end="" /></span></CheckLabel>
              </Field>
              <Field $top={8}>
                <label htmlFor="color"><Acc text="颜色" k="O" /></label>
                <Pair>
                  <Combo id="color" value="选项板" grey />
                  <Combo label="选项板" value="Excel" size={12} grey />
                </Pair>
              </Field>
              <Field $top={10}>
                <label htmlFor="style"><Acc text="条块样式" k="E" /></label>
                <Combo id="style" value="矩形" grey />
              </Field>
              <Field $top={10}>
                <label htmlFor="multi"><Acc text="多条块类型" k="M" /></label>
                <Combo id="multi" value="侧" grey />
              </Field>
              <Field $top={10}>
                <label htmlFor="size"><Acc text="条块大小(%)" k="R" /></label>
                <SizeRow>
                  <Spin>
                    <input id="size" defaultValue="70" />
                    <SpinButtons>
                      <button type="button" aria-label="增加"><Icon name="triangleUp" size={7} /></button>
                      <button type="button" aria-label="减少"><Icon name="triangle" size={7} /></button>
                    </SpinButtons>
                  </Spin>
                  <CheckLabel><Tick $s={16} /><span><Acc text="显示边框" k="W" end="" /></span></CheckLabel>
                </SizeRow>
              </Field>
            </FormPanel>
            <TypeTab>垂直条块</TypeTab>
            <SideButtons>
              <Raised $w={77}><span><Acc text="添加" k="A" end="" /></span><Icon name="triangle" size={8} /></Raised>
              <Raised $w={128}><span><Acc text="加载模板" k="T" end="" /></span><Icon name="triangle" size={8} /></Raised>
            </SideButtons>
          </LeftSide>
          <ChartPanel>
            <Chart />
            <Legend>
              {legendValues.map((v, i) => (
                <li key={v}><Swatch $c={palette[i]} />{`${v.padStart(13)} ${records[i][0]}.`}</li>
              ))}
            </Legend>
          </ChartPanel>
        </DialogBody>
        <DialogFoot>
          <a href="#about">关于图表</a>
          <LinkPad />
          <PushButton disabled>&lt; <Acc text="上一步" k="B" end="" /></PushButton>
          <PushButton $main $left={3}><Acc text="下一步" k="N" end="" /> &gt;</PushButton>
          <PushButton $left={25}>取消</PushButton>
          <SizeGrip width="11" height="11" viewBox="0 0 11 11">
            <path d="M8 0h3v3H8zM4 4h3v3H4zM8 4h3v3H8zM0 8h3v3H0zM4 8h3v3H4zM8 8h3v3H8z" fill="#bfbfbf" />
          </SizeGrip>
        </DialogFoot>
      </Dialog>

      <Marks width="1920" height="1025" viewBox="0 0 1920 1025">
        {arrows.map((a) => <polygon key={a} points={a} fill={MARK} />)}
      </Marks>
    </Screen>
  );
}
